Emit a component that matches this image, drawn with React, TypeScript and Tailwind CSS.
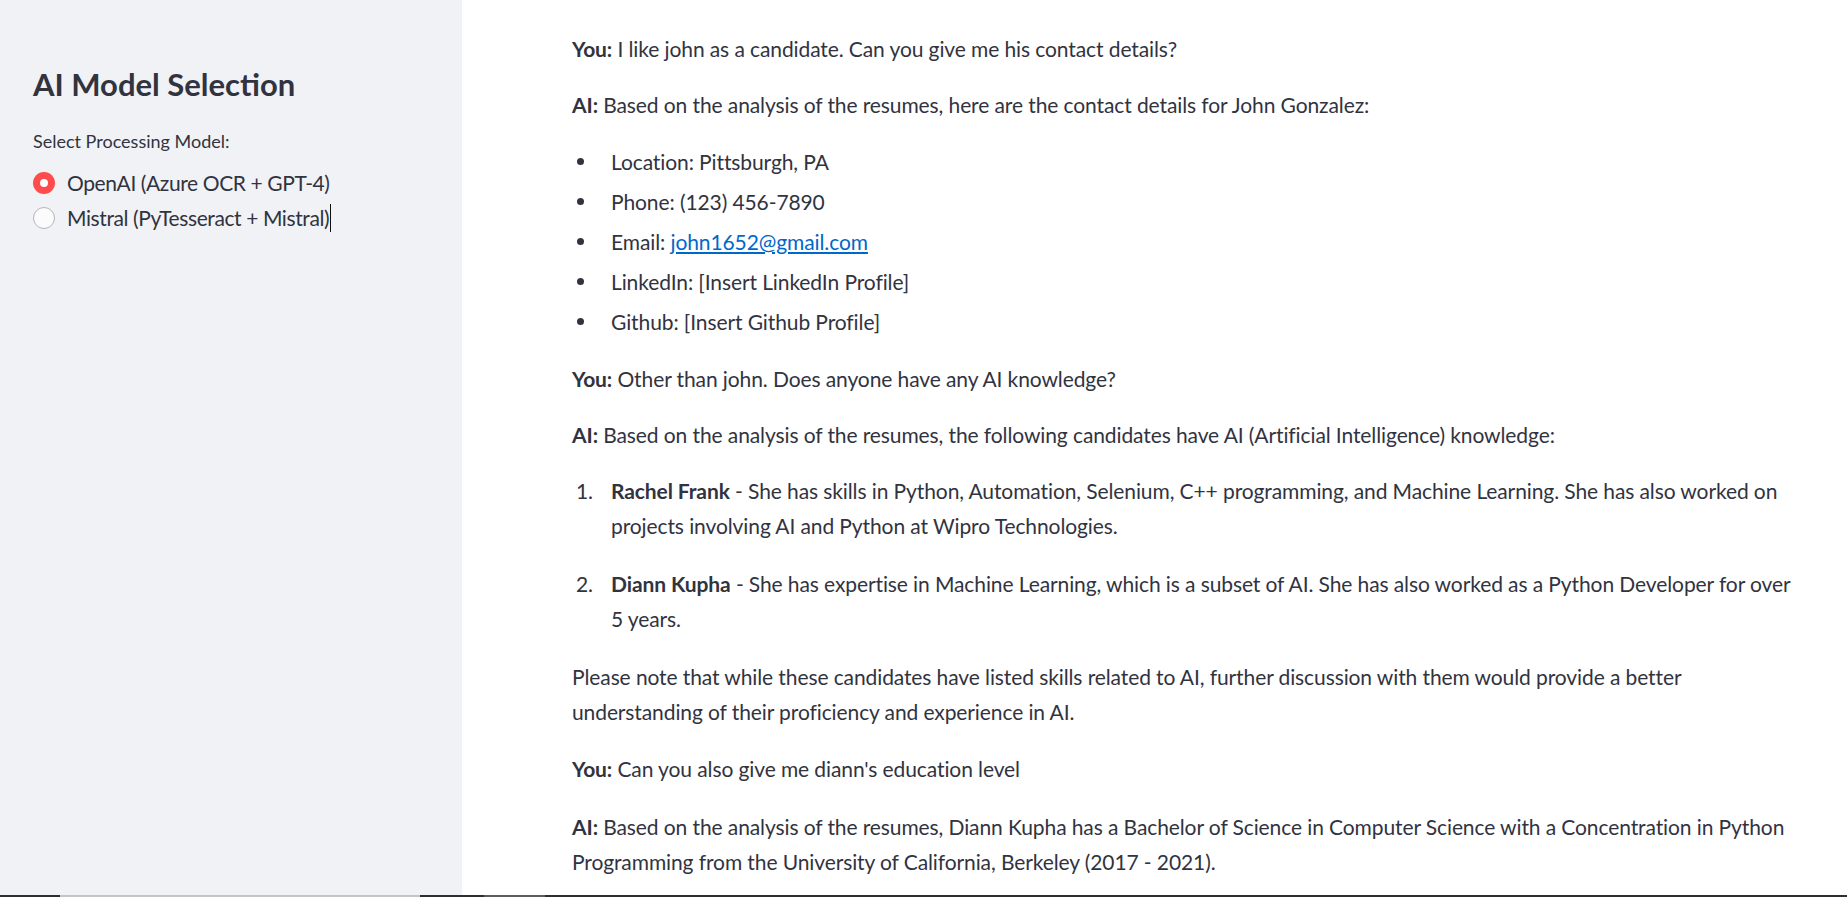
import React from 'react';

type Msg = { who: 'You' | 'AI'; text: React.ReactNode };

const contact = [
  'Location: Pittsburgh, PA',
  'Phone: (123) 456-7890',
  'Email: ',
  'LinkedIn: [Insert LinkedIn Profile]',
  'Github: [Insert Github Profile]',
];

function Line({ who, children, className = 'mb-[21px]' }: { who: Msg['who']; children: React.ReactNode; className?: string }) {
  return (
    <p className={className}>
      <strong className="font-bold">{who}:</strong> {children}
    </p>
  );
}

function Radio({ label, checked, caret }: { label: string; checked?: boolean; caret?: boolean }) {
  return (
    <div className="flex items-center h-[35px]">
      {checked ? (
        <span className="w-[22px] h-[22px] rounded-full bg-[#ff4b4b] flex items-center justify-center shrink-0">
          <span className="w-[8px] h-[8px] rounded-full bg-white" />
        </span>
      ) : (
        <span className="w-[22px] h-[22px] rounded-full bg-[#fbfbfc] border border-[#b4b6bd] shrink-0" />
      )}
      <span className="ml-[12px] text-[21px] tracking-[-0.4px]">{label}</span>
      {caret && <span className="w-px h-[28px] bg-[#111] ml-[1px]" />}
    </div>
  );
}

function Sidebar() {
  return (
    <aside className="w-[462px] shrink-0 bg-[#f0f2f6] px-[33px] pt-[65px]">
      <h2 className="text-[31px] leading-[38px] font-bold">AI Model Selection</h2>
      <div className="mt-[23px] text-[18px] leading-[30px]">Select Processing Model:</div>
      <div className="mt-[9px] flex flex-col">
        <Radio label="OpenAI (Azure OCR + GPT-4)" checked />
        <Radio label="Mistral (PyTesseract + Mistral)" caret />
      </div>
    </aside>
  );
}

export default function App() {
  return (
    <div className="h-screen w-full flex flex-col overflow-hidden bg-white font-[Lato,sans-serif] text-[#31333f]">
      <div className="flex flex-1 min-h-0">
        <Sidebar />
        <main className="flex-1 min-w-0 overflow-hidden pt-[31px] pl-[110px] pr-[50px] text-[21px] leading-[35px] tracking-[-0.1px]">
          <Line who="You">I like john as a candidate. Can you give me his contact details?</Line>
          <Line who="AI" className="mb-[22px]">Based on the analysis of the resumes, here are the contact details for John Gonzalez:</Line>
          <ul className="mb-[22px] flex flex-col gap-[5px]">
            {contact.map((c) => (
              <li key={c} className="flex">
                <span className="w-[39px] shrink-0 flex items-center pl-[5px]">
                  <span className="w-[7px] h-[7px] rounded-full bg-[#31333f]" />
                </span>
                <span>
                  {c}
                  {c === 'Email: ' && (
                    <a href="#" className="text-[#0068c9] underline">john1652@gmail.com</a>
                  )}
                </span>
              </li>
            ))}
          </ul>
          <Line who="You">Other than john. Does anyone have any AI knowledge?</Line>
          <Line who="AI">Based on the analysis of the resumes, the following candidates have AI (Artificial Intelligence) knowledge:</Line>
          <ol className="mb-[23px] flex flex-col gap-[23px]">
            <li className="flex">
              <span className="w-[39px] shrink-0 pl-[4px]">1.</span>
              <span>
                <strong className="font-bold">Rachel Frank</strong> - She has skills in Python, Automation, Selenium, C++ programming, and Machine Learning. She has also worked on projects involving AI and Python at Wipro Technologies.
              </span>
            </li>
            <li className="flex">
              <span className="w-[39px] shrink-0 pl-[4px]">2.</span>
              <span>
                <strong className="font-bold">Diann Kupha</strong> - She has expertise in Machine Learning, which is a subset of AI. She has also worked as a Python Developer for over 5 years.
              </span>
            </li>
          </ol>
          <p className="mb-[22px]">
            Please note that while these candidates have listed skills related to AI, further discussion with them would provide a better understanding of their proficiency and experience in AI.
          </p>
          <Line who="You" className="mb-[23px]">Can you also give me diann's education level</Line>
          <Line who="AI">Based on the analysis of the resumes, Diann Kupha has a Bachelor of Science in Computer Science with a Concentration in Python Programming from the University of California, Berkeley (2017 - 2021).</Line>
        </main>
      </div>
      <div className="h-[2px] shrink-0 flex bg-[#2e2e2e]">
        <div className="w-[60px]" />
        <div className="w-[360px] bg-[#c4c4c4]" />
        <div className="w-[64px]" />
        <div className="w-[61px] bg-[#5c5c5c]" />
      </div>
    </div>
  );
}
